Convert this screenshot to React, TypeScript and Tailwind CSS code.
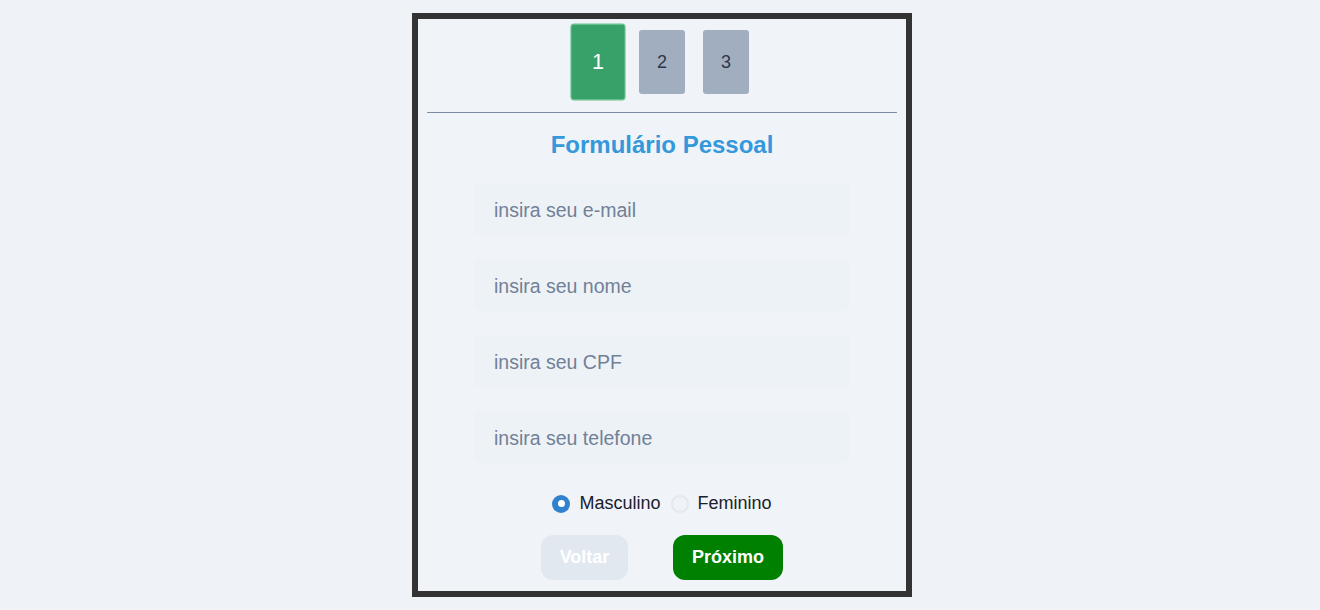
const steps = [1, 2, 3];

const fields = [
  "insira seu e-mail",
  "insira seu nome",
  "insira seu CPF",
  "insira seu telefone",
];

const App = () => {
  return (
    <div className="min-h-[610px] bg-[#eff3f8] pl-[4px] pt-[13px] font-['Liberation_Sans',Arial,sans-serif]">
      <div className="mx-auto h-[584px] w-[500px] border-[6px] border-[#333333] bg-[#f0f4f8] px-[9px]">
        <div className="flex justify-center gap-[18px] pt-[11px]">
          {steps.map((s) => (
            <div
              key={s}
              className={
                s === 1
                  ? "flex h-[64px] w-[46px] scale-[1.2] items-center justify-center rounded-[3px] border border-[#68c08f] bg-[#38a169] text-[18px] text-white"
                  : "flex h-[64px] w-[46px] items-center justify-center rounded-[3px] bg-[#a0aec0] text-[18px] text-[#2d3748]"
              }
            >
              {s}
            </div>
          ))}
        </div>

        <div className="mt-[18px] h-px bg-[#7b8ba3]" />

        <h2 className="mt-[18px] text-center text-[24px] font-bold leading-[28px] text-[#3498db]">
          Formulário Pessoal
        </h2>

        <div className="mt-[24px] flex flex-col items-center gap-[24px]">
          {fields.map((f) => (
            <input
              key={f}
              type="text"
              placeholder={f}
              className="h-[52px] w-[376px] rounded-[6px] bg-[#edf2f7] px-[20px] pt-[3px] text-[19.5px] text-[#2d3748] outline-none placeholder:text-[#718096]"
            />
          ))}
        </div>

        <div className="mt-[27px] flex items-center justify-center text-[18px] text-[#1a202c]">
          <span className="flex h-[18px] w-[18px] items-center justify-center rounded-full bg-[#3182ce]">
            <span className="h-[7px] w-[7px] rounded-full bg-white" />
          </span>
          <span className="ml-[9px]">Masculino</span>
          <span className="ml-[10px] h-[18px] w-[18px] rounded-full border-2 border-[#e2e8f0] bg-[#f0f4f8]" />
          <span className="ml-[9px]">Feminino</span>
        </div>

        <div className="mt-[18px] flex justify-center gap-[45px]">
          <button className="h-[45px] w-[87px] rounded-[12px] bg-[#e2e8f0] text-[18px] font-bold text-white">
            Voltar
          </button>
          <button className="h-[45px] w-[110px] rounded-[12px] bg-[#008000] text-[18px] font-bold text-white">
            Próximo
          </button>
        </div>
      </div>
    </div>
  );
};

export default App;
